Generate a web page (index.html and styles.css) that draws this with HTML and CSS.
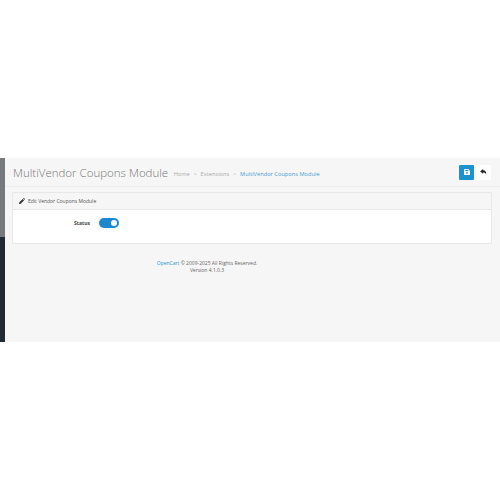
FILE: index.html
```html
<!DOCTYPE html>
<html lang="en">
<head>
    <meta charset="UTF-8">
    <title>MultiVendor Coupons Module</title>
    <link rel="stylesheet" href="styles.css">
</head>
<body>
    <div class="wrapper">
        <aside class="sidebar">
            <div class="sidebar-top"></div>
            <div class="sidebar-bottom"></div>
        </aside>
        <div class="content">
            <header class="page-header">
                <h1>MultiVendor Coupons Module</h1>
                <ul class="breadcrumb">
                    <li>Home</li>
                    <li>Extensions</li>
                    <li class="current">MultiVendor Coupons Module</li>
                </ul>
                <div class="buttons">
                    <button class="btn btn-primary" type="button" aria-label="Save">
                        <svg width="6" height="6" viewBox="0 0 7 7"><path fill="#fff" d="M0 1a1 1 0 0 1 1-1h4l2 2v4a1 1 0 0 1-1 1H1a1 1 0 0 1-1-1z"/><rect x="1.500" y="1" width="3.500" height="1.400" fill="#1e91cf"/><circle cx="3.500" cy="4.600" r="1" fill="#1e91cf"/></svg>
                    </button>
                    <button class="btn btn-light" type="button" aria-label="Back">
                        <svg width="7" height="6" viewBox="0 0 9 8"><path fill="#222" d="M4 0 0 3.200 4 6.400V4.500c2 0 3.200.6 4 2.500.4-3-1-5-4-5.200z"/></svg>
                    </button>
                </div>
            </header>
            <section class="card">
                <div class="card-header">
                    <svg width="6" height="6" viewBox="0 0 8 8"><path fill="#333" d="M0 8l.5-2.300L5 1.200 6.800 3 2.300 7.500zM5.600.6l.5-.5a.4.4 0 0 1 .5 0l1.300 1.300a.4.4 0 0 1 0 .5l-.5.5z"/></svg>
                    <span>Edit Vendor Coupons Module</span>
                </div>
                <div class="card-body">
                    <div class="form-row">
                        <label class="form-label">Status</label>
                        <span class="switch"><span class="knob"></span></span>
                    </div>
                </div>
            </section>
            <footer class="page-footer">
                <a href="#">OpenCart</a> &copy; 2009-2025 All Rights Reserved.<br>
                Version 4.1.0.3
            </footer>
        </div>
    </div>
</body>
</html>
```

FILE: styles.css
```css
body {
    font-family: 'Open Sans', sans-serif;
    margin: 0;
    padding: 0;
    background-color: #fff;
    color: #666;
}

.wrapper {
    display: flex;
    height: 184px;
    margin-top: 158px;
}

.sidebar {
    width: 5px;
    display: flex;
    flex-direction: column;
}

.sidebar-top {
    height: 79px;
    background-color: #777a7c;
}

.sidebar-bottom {
    flex-grow: 1;
    background-color: #1f2a33;
}

.content {
    flex-grow: 1;
    background-color: #f6f6f6;
}

.page-header {
    display: flex;
    align-items: center;
    height: 28px;
    padding: 0 8px;
    border-bottom: 1px solid #eee;
}

h1 {
    font-size: 11.500px;
    font-weight: 300;
    color: #777;
    margin: 0 5.500px 0 0;
    white-space: nowrap;
}

.breadcrumb {
    display: flex;
    list-style: none;
    margin: 3px 0 0 0;
    padding: 0;
    font-size: 5.700px;
    color: #aaa;
    flex-grow: 1;
}

.breadcrumb li + li::before {
    content: ">";
    margin: 0 4px;
    font-size: 5px;
    color: #aaa;
}

.breadcrumb .current {
    color: #4a9bd0;
}

.buttons {
    display: flex;
    gap: 2px;
    margin-right: 1px;
}

.btn {
    width: 15px;
    height: 15px;
    padding: 0;
    border: none;
    border-radius: 1px;
    display: flex;
    align-items: center;
    justify-content: center;
}

.btn-primary {
    background-color: #1e91cf;
}

.btn-light {
    background-color: #fff;
}

.card {
    margin: 5px 8px 0 7px;
    background-color: #fff;
    border: 1px solid #e8e8e8;
    border-radius: 1px;
}

.card-header {
    display: flex;
    align-items: center;
    gap: 3px;
    height: 16px;
    padding-left: 6px;
    font-size: 5px;
    color: #555;
    background-color: #f6f6f6;
    border-bottom: 1px solid #e8e8e8;
}

.card-body {
    height: 33px;
}

.form-row {
    display: flex;
    align-items: center;
    padding-top: 8px;
}

.form-label {
    width: 77px;
    text-align: right;
    font-size: 5px;
    font-weight: 700;
    color: #444;
    margin-right: 9px;
}

.switch {
    position: relative;
    width: 20px;
    height: 10px;
    border-radius: 5px;
    background-color: #1e88cf;
}

.knob {
    position: absolute;
    top: 2px;
    right: 2px;
    width: 6px;
    height: 6px;
    border-radius: 50%;
    background-color: #fff;
}

.page-footer {
    width: 404px;
    margin-top: 16px;
    text-align: center;
    font-size: 5px;
    line-height: 7px;
    color: #666;
}

.page-footer a {
    color: #1e91cf;
    text-decoration: none;
}
```
